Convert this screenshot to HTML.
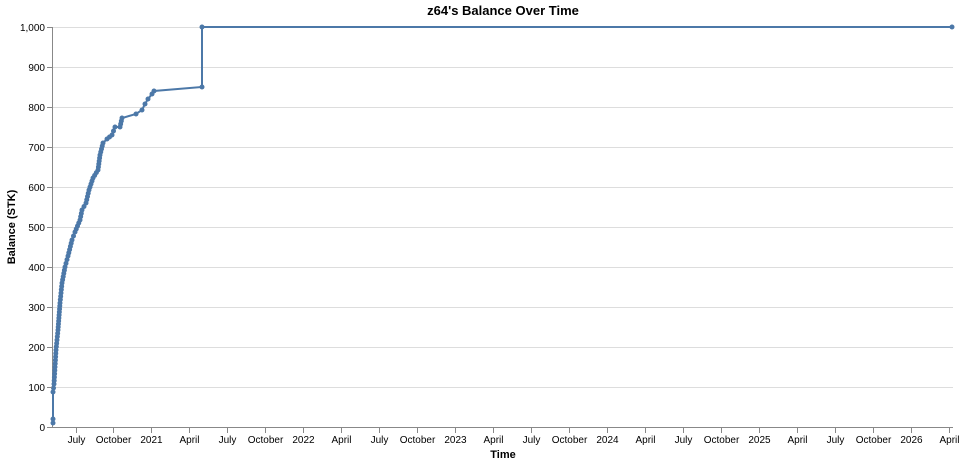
<!DOCTYPE html>
<html><head><meta charset="utf-8"><style>
html,body{margin:0;padding:0;background:#fff;}
svg{display:block;font-family:"Liberation Sans",Arial,sans-serif;}
</style></head><body>
<svg id="s" width="963" height="464" viewBox="0 0 963 464">
<g id="grid" stroke="#ddd" stroke-width="1"></g>
<line x1="52.5" y1="27" x2="52.5" y2="427" stroke="#888"/>
<line x1="52" y1="427.5" x2="953" y2="427.5" stroke="#888"/>
<g id="yl" font-size="10" fill="#000" text-anchor="end"></g>
<g id="xl" font-size="10" fill="#000" text-anchor="middle"></g>
<text x="503" y="15" font-size="13" font-weight="bold" text-anchor="middle">z64's Balance Over Time</text>
<text x="503" y="458" font-size="11" font-weight="bold" text-anchor="middle">Time</text>
<text transform="translate(15,227) rotate(-90)" font-size="11" font-weight="bold" text-anchor="middle">Balance (STK)</text>
<g id="line"></g>
</svg>
<script>
var ns="http://www.w3.org/2000/svg",s=document.getElementById('s');
function el(t,a,p){var e=document.createElementNS(ns,t);for(var k in a)e.setAttribute(k,a[k]);(p||s).appendChild(e);return e;}
var g=document.getElementById('grid'),yl=document.getElementById('yl'),xl=document.getElementById('xl');
for(var v=0;v<=1000;v+=100){var y=427-v*0.4+0.5;
 if(v>0)el('line',{x1:53,x2:953,y1:y,y2:y},g);
 el('line',{x1:47,x2:52,y1:y,y2:y,stroke:'#888'});
 var t=el('text',{x:45,y:y+3.5},yl);t.textContent=v==1000?'1,000':v;}
var labs=['July','October','2021','April','July','October','2022','April','July','October','2023','April','July','October','2024','April','July','October','2025','April','July','October','2026','April'];
for(var i=0;i<labs.length;i++){var x=Math.round(75.5+i*37.98)+0.5;
 el('line',{x1:x,x2:x,y1:428,y2:433,stroke:'#888'});
 var t=el('text',{x:x,y:443},xl);t.textContent=labs[i];}
var pts=[[53,423],[53,419],[53,392],[54,384],[55,367],[56,350],[58,330],[60,303],[62,283],[65,267],[68,256],[72,240],[75,232],[80,220],[82,210],[86,203],[89,190],[93,178],[98,170],[100,155],[103,143],[107,139],[112,135],[115,127],[120,127],[122,118],[136,114],[142,110],[145,104],[148,99],[152,94],[154,91],[202,87],[202,27],[952,27]];
var lg=document.getElementById('line');
el('polyline',{points:pts.map(function(p){return p.join(',')}).join(' '),fill:'none',stroke:'#4c78a8','stroke-width':2},lg);
for(var i=0;i<pts.length;i++){el('circle',{cx:pts[i][0],cy:pts[i][1],r:2.5,fill:'#4c78a8'},lg);
 if(i>=2&&i<25){var a=pts[i],b=pts[i+1];var n=Math.floor(Math.hypot(b[0]-a[0],b[1]-a[1])/3);
  for(var j=1;j<n;j++)el('circle',{cx:a[0]+(b[0]-a[0])*j/n,cy:a[1]+(b[1]-a[1])*j/n,r:2.5,fill:'#4c78a8'},lg);}}
</script>
</body></html>
